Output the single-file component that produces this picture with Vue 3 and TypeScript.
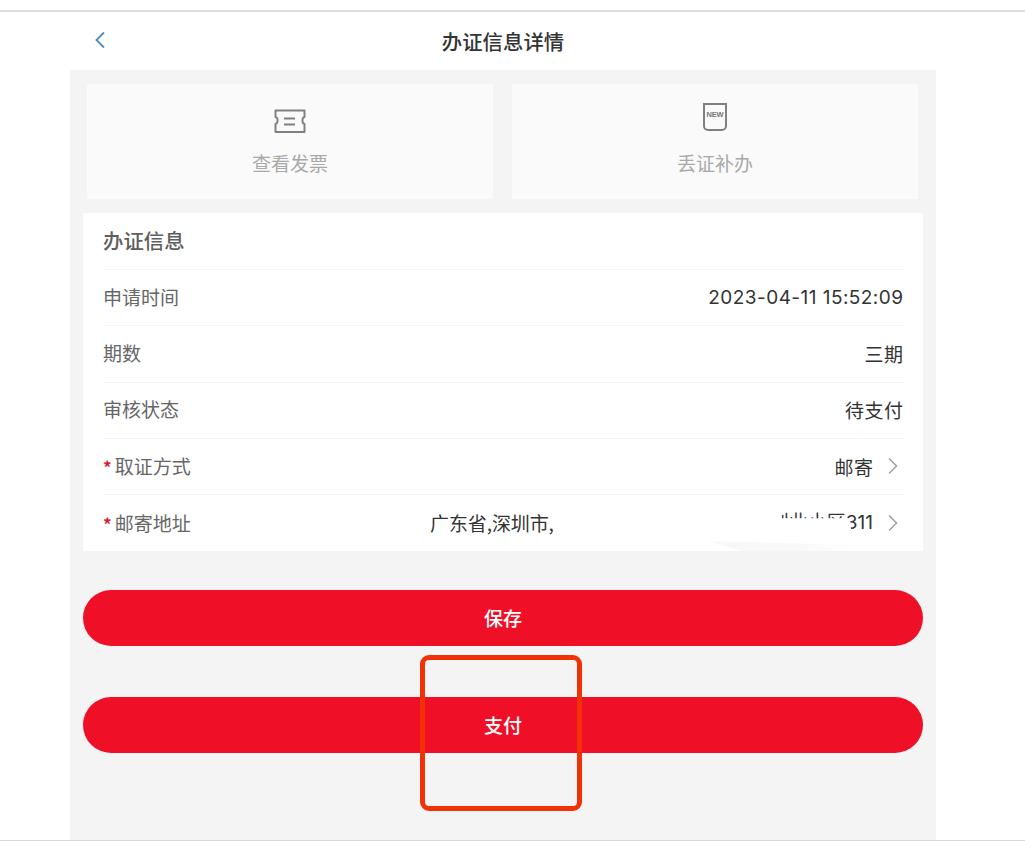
<script setup lang="ts">
interface Row { label: string; value: string; required?: boolean; arrow?: boolean }
const rows: Row[] = [
  { label: '申请时间', value: '2023-04-11 15:52:09' },
  { label: '期数', value: '三期' },
  { label: '审核状态', value: '待支付' },
  { label: '取证方式', value: '邮寄', required: true, arrow: true },
]
</script>

<template>
  <div class="page">
    <header class="topbar">
      <div class="nav">
        <svg class="back" width="12" height="18" viewBox="0 0 12 18"><path d="M10 1.500 2.500 9l7.500 7.500" fill="none" stroke="#4d8fc4" stroke-width="1.800"/></svg>
        <h1>办证信息详情</h1>
      </div>
    </header>
    <main class="content">
      <section class="cards">
        <div class="card">
          <svg class="icon-ticket" width="34" height="26" viewBox="0 0 34 26">
            <path d="M2.500 2h29v6.500q-2 .7-2 2.500v2q0 1.800 2 2.500v8h-29v-8q2-.7 2-2.500v-2q0-1.800-2-2.500z" transform="translate(0 -.5)" fill="none" stroke="#808080" stroke-width="2" stroke-linejoin="round"/>
            <path d="M11 9.500h11M11 15.500h11" stroke="#808080" stroke-width="2"/>
          </svg>
          <span>查看发票</span>
        </div>
        <div class="card">
          <div class="icon-new">NEW</div>
          <span>丢证补办</span>
        </div>
      </section>

      <section class="panel">
        <div class="panel-title">办证信息</div>
        <div v-for="row in rows" :key="row.label" class="row" :class="{ 'has-arrow': row.arrow }">
          <span class="label"><i v-if="row.required">*</i>{{ row.label }}</span>
          <span class="value">{{ row.value }}</span>
          <svg v-if="row.arrow" class="chev" width="12" height="18" viewBox="0 0 12 18"><path d="M2 1.500 9.500 9 2 16.500" fill="none" stroke="#a0a0a0" stroke-width="1.500"/></svg>
        </div>
        <div class="row has-arrow last">
          <span class="label"><i>*</i>邮寄地址</span>
          <span class="addr">广东省,深圳市,</span>
          <span class="addr-end">创业小区311</span>
          <svg class="chev" width="12" height="18" viewBox="0 0 12 18"><path d="M2 1.500 9.500 9 2 16.500" fill="none" stroke="#a0a0a0" stroke-width="1.500"/></svg>
          <div class="smear"></div>
        </div>
      </section>

      <div class="actions">
        <button type="button">保存</button>
        <button type="button">支付</button>
        <div class="mark"></div>
      </div>
    </main>
  </div>
</template>

<style scoped>
.page {
  height: 841px;
  width: 1025px;
  overflow: hidden;
  background: #fff;
  font-family: "Noto Sans CJK SC", "Noto Sans", sans-serif;
  color: #333;
  display: flex;
  flex-direction: column;
  position: relative;
}
.topbar {
  margin-top: 10px;
  border-top: 2px solid #dedede;
  height: 58px;
  flex: none;
}
.nav {
  position: relative;
  height: 58px;
  display: flex;
  align-items: center;
  justify-content: center;
}
.back {
  position: absolute;
  left: 94px;
  top: 19px;
}
h1 {
  margin: -1px 0 0 -19px;
  font-size: 20.400px;
  font-weight: 500;
  color: #333;
  line-height: 58px;
}
.content {
  width: 866px;
  margin-left: 70px;
  height: 770px;
  background: #f4f4f4;
  box-sizing: border-box;
  padding-top: 14px;
  position: relative;
}
.page::after {
  content: "";
  position: absolute;
  left: 0;
  right: 0;
  top: 840px;
  height: 1px;
  background: #d8d8d8;
}
.cards {
  display: flex;
  gap: 19px;
  padding: 0 18px 0 17px;
}
.card {
  flex: 1;
  height: 115px;
  background: #fafafa;
  display: flex;
  flex-direction: column;
  align-items: center;
  color: #a8a8a8;
  font-size: 19px;
  position: relative;
}
.card span {
  position: absolute;
  top: 65px;
  line-height: 28px;
}
.icon-ticket {
  position: absolute;
  top: 25px;
}
.icon-new {
  position: absolute;
  top: 19px;
  width: 24px;
  height: 28px;
  box-sizing: border-box;
  border: 2px solid #808080;
  border-radius: 0 0 5px 5px;
  color: #777;
  font-family: "Liberation Sans", sans-serif;
  font-size: 7.500px;
  font-weight: 700;
  line-height: 10px;
  padding-top: 5px;
  text-align: center;
  letter-spacing: -0.200px;
}
.panel {
  margin: 14px 13px 0;
  height: 338px;
  background: #fff;
  padding: 0 20px;
  box-sizing: border-box;
  overflow: hidden;
}
.panel-title {
  height: 57px;
  line-height: 55px;
  font-size: 20.400px;
  font-weight: 500;
  color: #5e5e5e;
  border-bottom: 1px solid #f4f4f4;
  box-sizing: border-box;
}
.row {
  height: 56.300px;
  display: flex;
  align-items: center;
  font-size: 19px;
  box-sizing: border-box;
  border-bottom: 1px solid #f4f4f4;
  color: #666;
  position: relative;
  padding-bottom: 1px;
}
.row.has-arrow {
  padding-right: 4px;
}
.row.last {
  border-bottom: 0;
  padding-bottom: 0;
}
.label {
  flex: 1;
  color: #666;
  margin-top: -2px;
}
.label i {
  color: #d9202c;
  font-style: normal;
  font-weight: 700;
  font-size: 17px;
  margin-right: 3px;
}
.value {
  font-family: Inter, "Noto Sans CJK SC", sans-serif;
  color: #333;
  font-size: 19px;
  letter-spacing: 0.450px;
  margin-right: -0.450px;
}
.chev {
  margin-left: 14px;
  flex: none;
}
.addr {
  position: absolute;
  left: 327px;
  color: #333;
  letter-spacing: -0.100px;
  margin-top: -2px;
}
.addr-end {
  font-family: Inter, "Noto Sans CJK SC", sans-serif;
  color: #333;
  line-height: 24px;
  white-space: nowrap;
  clip-path: polygon(12px 0, 100% 0, 100% 100%, 82px 100%, 80px 7px, 12px 7px);
}
.smear {
  position: absolute;
  left: 604px;
  top: 46px;
  width: 146px;
  height: 12px;
  background: linear-gradient(90deg, #f8f8f8 60%, #fff);
  clip-path: polygon(0 0, 100% 30%, 100% 100%, 30% 100%);
}
.actions {
  margin: 39px 13px 0;
  display: flex;
  flex-direction: column;
  gap: 51px;
  position: relative;
}
button {
  height: 56px;
  border: 0;
  border-radius: 28px;
  background: #ef0f26;
  color: #fff;
  font-family: inherit;
  font-size: 19px;
  font-weight: 500;
  padding: 0 0 2px;
}
.mark {
  position: absolute;
  left: 337px;
  top: 65px;
  width: 162px;
  height: 156px;
  box-sizing: border-box;
  border: 5.500px solid #f13207;
  border-radius: 9px;
  pointer-events: none;
}
</style>

<style>
html, body {
  margin: 0;
  background: #fff;
}
</style>
